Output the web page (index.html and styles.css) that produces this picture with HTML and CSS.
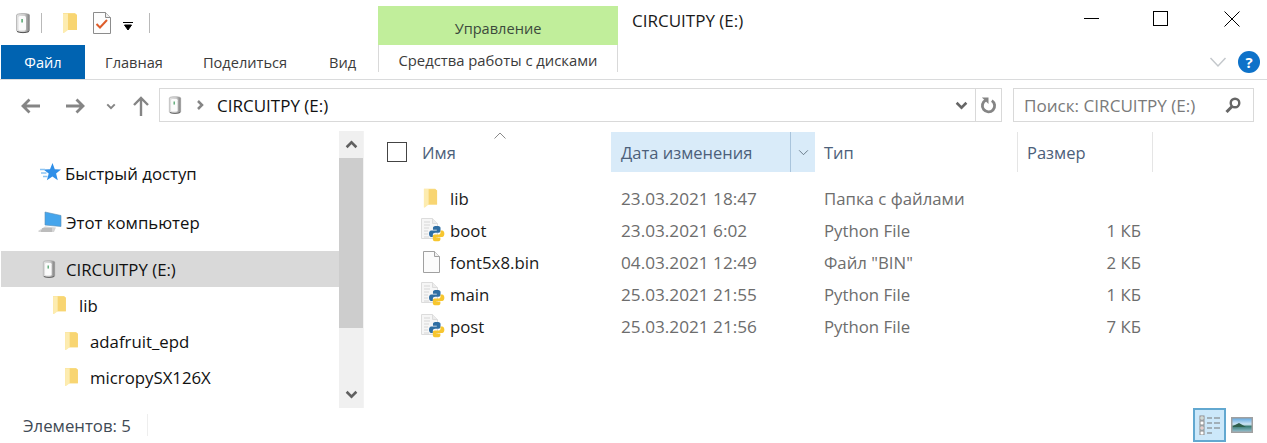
FILE: index.html
```html
<!DOCTYPE html>
<html lang="ru">
<head>
<meta charset="utf-8">
<title>CIRCUITPY (E:)</title>
<link rel="stylesheet" href="styles.css">
</head>
<body>
<svg class="defs" width="0" height="0" aria-hidden="true">
  <defs>
    <linearGradient id="drv" x1="0" y1="0" x2="1" y2="0"><stop offset="0" stop-color="#e2e2e2"/><stop offset=".6" stop-color="#cfcfcf"/><stop offset="1" stop-color="#7c7c7c"/></linearGradient>
    <symbol id="folder" viewBox="0 0 16 22">
      <path d="M1 1h12l2 2v15H5l-4 3z" fill="#f9dc85"/>
      <path d="M5 2h8l2 1v15H5z" fill="#f8d572"/>
      <path d="M1 1.500h5V18l-4 3H1z" fill="#fdecb0"/>
    </symbol>
    <symbol id="drive" viewBox="0 0 16 22">
      <path d="M1.500 3C1.500 1 14.500 1 14.500 3V18.500c0 2.500-13 2.500-13 0z" fill="url(#drv)" stroke="#999" stroke-width=".6"/>
      <rect x="3.500" y="4" width="7.500" height="14.500" rx="1.500" fill="#fbfbfb"/>
      <rect x="6.300" y="7" width="1.600" height="3.500" fill="#5aa874"/>
      <path d="M2 19.500c3 1.500 9 1.500 12 0" stroke="#555" fill="none"/>
    </symbol>
    <symbol id="python" viewBox="0 0 24 24">
      <path d="M.5.500h11l5 5v15H.500z" fill="#f6f6f6" stroke="#dcdcdc"/>
      <path d="M11.500.500v5h5" fill="#ececec" stroke="#dcdcdc"/>
      <path d="M3 4h6M3 7h6M3 10h5M3 13h4M3 16h4M3 19h5" stroke="#d6d6d6"/>
      <g transform="translate(8 8) scale(.64)">
        <path d="M12 0C8 0 6.200 1 6.200 3V6h6V7H3.500C1.200 7 0 9 0 12s1.200 5 3.500 5H6V14c0-2.200 1.500-3.300 3.500-3.300H15c1.800 0 3-1.100 3-2.700V3c0-2-2-3-6-3z" fill="#2f6ea3"/>
        <path d="M12 24c4 0 5.800-1 5.800-3V18h-6V17h8.700c2.300 0 3.500-2 3.500-5s-1.200-5-3.500-5H18v3c0 2.200-1.500 3.300-3.500 3.300H9c-1.800 0-3 1.100-3 2.700V21c0 2 2 3 6 3z" fill="#f7c62f"/>
      </g>
    </symbol>
    <symbol id="chev-d" viewBox="0 0 12 8"><path d="M1.500 1.500 6 6l4.500-4.500" fill="none" stroke="currentColor" stroke-width="2.400"/></symbol>
    <symbol id="thin-d" viewBox="0 0 12 8"><path d="M1 1.500 6 6.500l5-5" fill="none" stroke="currentColor" stroke-width="1"/></symbol>
  </defs>
</svg>

<header class="titlebar">
  <div class="qat">
    <svg class="qat-drive"><use href="#drive"/></svg>
    <span class="qat-sep first"></span>
    <svg class="qat-folder"><use href="#folder"/></svg>
    <svg class="qat-check" viewBox="0 0 18 22">
      <path d="M.5.500h12l5 5v16H.500z" fill="#fdfdfd" stroke="#8c8c8c"/>
      <path d="M12.500.500v5h5" fill="#eee" stroke="#8c8c8c"/>
      <path d="M3.500 12l3.500 3.500L14 8" fill="none" stroke="#dd5c2a" stroke-width="2"/>
    </svg>
    <svg class="qat-more" viewBox="0 0 10 9"><path d="M0 .5h10M1.500 3h7L5 8z" stroke="#000" fill="#000" stroke-width="1"/></svg>
    <span class="qat-sep"></span>
  </div>
  <div class="context-label">Управление</div>
  <div class="window-title">CIRCUITPY (E:)</div>
  <div class="window-controls">
    <svg class="wc wc-min" viewBox="0 0 16 16"><path d="M0 7.500h15" stroke="#000"/></svg>
    <svg class="wc wc-max" viewBox="0 0 16 16"><rect x=".5" y=".5" width="14" height="14" fill="none" stroke="#000"/></svg>
    <svg class="wc wc-close" viewBox="0 0 16 16"><path d="M.5.500l15 15M15.500.500l-15 15" stroke="#000" fill="none"/></svg>
  </div>
</header>

<nav class="ribbon">
  <div class="tab tab-file">Файл</div>
  <div class="tab tab-home">Главная</div>
  <div class="tab tab-share">Поделиться</div>
  <div class="tab tab-view">Вид</div>
  <div class="tab tab-context">Средства работы с дисками</div>
  <svg class="ribbon-chev" viewBox="0 0 18 12"><path d="M1.500 2 9 10l7.500-8" fill="none" stroke="#c4c8cc" stroke-width="1.500"/></svg>
  <div class="help">?</div>
</nav>

<div class="addressbar">
  <svg class="nav-arrow back" viewBox="0 0 20 16"><path d="M20 8H3M9.500 1.500 3 8l6.500 6.500" fill="none" stroke="#858585" stroke-width="2.800"/></svg>
  <svg class="nav-arrow fwd" viewBox="0 0 20 16"><path d="M0 8h17M10.500 1.500 17 8l-6.500 6.500" fill="none" stroke="#858585" stroke-width="2.800"/></svg>
  <svg class="recent"><use href="#chev-d"/></svg>
  <svg class="up" viewBox="0 0 16 20"><path d="M8 20V2M1 9l7-7 7 7" fill="none" stroke="#858585" stroke-width="2.400"/></svg>
  <div class="pathbox">
    <svg class="path-drive"><use href="#drive"/></svg>
    <svg class="path-sep" viewBox="0 0 7 10"><path d="M1 1l4 4-4 4" fill="none" stroke="#858585" stroke-width="2.500"/></svg>
    <span class="path-text">CIRCUITPY (E:)</span>
    <svg class="path-drop"><use href="#chev-d"/></svg>
    <div class="path-refresh">
      <svg viewBox="0 0 18 18"><path d="M6 3.500a6.500 6.500 0 1 0 6.500 .3" fill="none" stroke="#858585" stroke-width="3"/><path d="M2 .5h7v7z" fill="#858585"/></svg>
    </div>
  </div>
  <div class="searchbox">
    <span class="search-text">Поиск: CIRCUITPY (E:)</span>
    <svg class="search-icon" viewBox="0 0 16 16"><circle cx="10" cy="6" r="4.300" fill="none" stroke="#666" stroke-width="2.400"/><path d="M7 9.500 1.500 15" stroke="#666" stroke-width="3"/></svg>
  </div>
</div>

<main class="main">
  <aside class="nav">
    <div class="tree">
      <div class="node node-quick">
        <svg class="ico-star" viewBox="0 0 21 20"><path d="M12.500 0l2.300 6.300 6.200.3-4.900 4 1.700 6.600-5.400-3.700-5.500 3.700 1.800-6.600L3.500 6.600 10 6.300z" fill="#2f8fe8"/><path d="M0 6.500h5M1 10h5.500M3 13.500h4.500" stroke="#8cc4f2" stroke-width="1.300"/></svg>
        Быстрый доступ
      </div>
      <div class="node node-pc">
        <svg class="ico-pc" viewBox="0 0 24 22"><path d="M7 1l16 3.500v11L7 14z" fill="#45a5ec" stroke="#5d8fb5" stroke-width=".6"/><path d="M0 20l7-4.500 11 1-2 4.500H1z" fill="#d4d4d4"/><path d="M4 18h10M3 20h11" stroke="#a4a4a4"/></svg>
        Этот компьютер
      </div>
      <div class="node node-drive">
        <svg class="ico-drive"><use href="#drive"/></svg>
        CIRCUITPY (E:)
      </div>
      <div class="node node-lib">
        <svg class="ico-folder"><use href="#folder"/></svg>
        lib
      </div>
      <div class="node node-sub">
        <svg class="ico-folder"><use href="#folder"/></svg>
        adafruit_epd
      </div>
      <div class="node node-sub">
        <svg class="ico-folder"><use href="#folder"/></svg>
        micropySX126X
      </div>
    </div>
  </aside>
  <div class="scrollbar">
    <div class="sb-btn"><svg class="sb-up"><use href="#chev-d"/></svg></div>
    <div class="sb-thumb"></div>
    <div class="sb-track"></div>
    <div class="sb-btn sb-bottom"><svg><use href="#chev-d"/></svg></div>
  </div>
  <section class="content">
    <div class="head">
      <div class="hcell h-name">
        <span class="checkbox"></span>
        <span>Имя</span>
        <svg class="sort" viewBox="0 0 12 7"><path d="M.5 6.500 6 1l5.500 5.500" fill="none" stroke="#8a8a8a"/></svg>
      </div>
      <div class="hcell h-date"><span class="h-date-text">Дата изменения</span><span class="h-date-btn"><svg><use href="#thin-d"/></svg></span></div>
      <div class="hcell h-type">Тип</div>
      <div class="hcell h-size">Размер</div>
    </div>
    <div class="rows">
      <div class="row">
        <div class="c-name"><svg class="row-folder"><use href="#folder"/></svg>lib</div>
        <div class="c-date">23.03.2021 18:47</div><div class="c-type">Папка с файлами</div><div class="c-size"></div>
      </div>
      <div class="row">
        <div class="c-name"><svg class="row-py"><use href="#python"/></svg>boot</div>
        <div class="c-date">23.03.2021 6:02</div><div class="c-type">Python File</div><div class="c-size">1 КБ</div>
      </div>
      <div class="row">
        <div class="c-name"><svg class="row-file" viewBox="0 0 18 22"><path d="M.5.500h11l5 5v16H.500z" fill="#fbfbfb" stroke="#a0a0a0"/><path d="M11.500.500v5h5" fill="#f0f0f0" stroke="#a0a0a0"/></svg>font5x8.bin</div>
        <div class="c-date">04.03.2021 12:49</div><div class="c-type">Файл "BIN"</div><div class="c-size">2 КБ</div>
      </div>
      <div class="row">
        <div class="c-name"><svg class="row-py"><use href="#python"/></svg>main</div>
        <div class="c-date">25.03.2021 21:55</div><div class="c-type">Python File</div><div class="c-size">1 КБ</div>
      </div>
      <div class="row">
        <div class="c-name"><svg class="row-py"><use href="#python"/></svg>post</div>
        <div class="c-date">25.03.2021 21:56</div><div class="c-type">Python File</div><div class="c-size">7 КБ</div>
      </div>
    </div>
  </section>
</main>

<footer class="status">
  <span class="status-text">Элементов: 5</span>
  <span class="status-sep"></span>
  <div class="view-btn active">
    <svg viewBox="0 0 22 20">
      <rect x="1" y="1" width="4" height="4" fill="#fff" stroke="#8a8a8a"/><rect x="1" y="6" width="4" height="4" fill="#fff" stroke="#8a8a8a"/><rect x="1" y="11" width="4" height="4" fill="#fff" stroke="#8a8a8a"/><rect x="1" y="16" width="4" height="4" fill="#fff" stroke="#8a8a8a"/>
      <path d="M2.500 2.500h1v1h-1z" fill="#3a7a60"/><path d="M2.500 12.500h1v1h-1z" fill="#b03030"/>
      <path d="M8 3h5M15 3h6M8 8h5M15 8h6M8 13h5M15 13h6M8 18h5" stroke="#777" stroke-width="1.200"/>
    </svg>
  </div>
  <svg class="view-large" viewBox="0 0 22 16">
    <defs><linearGradient id="sky" x1="0" y1="0" x2="0" y2="1"><stop offset="0" stop-color="#5aa5e0"/><stop offset=".45" stop-color="#cfe6f5"/><stop offset=".6" stop-color="#3d7f78"/><stop offset="1" stop-color="#9cc5d8"/></linearGradient></defs>
    <rect x=".75" y=".75" width="20.500" height="14.500" fill="url(#sky)" stroke="#a0a0a0" stroke-width="1.500"/>
    <path d="M2 9l6-3 7 4H2z" fill="#2f5f4c"/>
  </svg>
</footer>
</body>
</html>
```

FILE: styles.css
```css
* { box-sizing: border-box; }
html, body { margin: 0; padding: 0; }
body {
  width: 1267px;
  height: 443px;
  overflow: hidden;
  background: #fff;
  color: #000;
  font-family: "Open Sans", "Noto Sans", sans-serif;
  font-size: 16.8px;
  display: flex;
  flex-direction: column;
}
.defs { display: block; height: 0; }
svg { display: block; flex: none; }

/* title bar */
.titlebar { height: 45px; flex: none; display: flex; align-items: flex-start; }
.qat { width: 378px; height: 45px; display: flex; align-items: center; padding: 1px 0 0 15px; flex: none; }
.qat-drive { width: 16px; height: 22px; }
.qat-sep { width: 1px; height: 20px; background: #b9b9b9; margin-left: 16px; }
.qat-sep.first { margin-left: 10px; }
.qat-folder { width: 16px; height: 22px; margin-left: 20px; }
.qat-check { width: 18px; height: 22px; margin-left: 15px; }
.qat-more { width: 10px; height: 9px; margin-left: 12px; margin-top: 6px; }
.context-label {
  width: 240px; height: 39px; margin-top: 6px; flex: none;
  background: #c1ee9b; color: #3c4a3c; font-size: 14.6px;
  display: flex; align-items: center; justify-content: center; padding-top: 5px;
}
.window-title { padding: 11px 0 0 14px; color: #1a1a1a; line-height: 20px; font-size: 17px; }
.window-controls { margin-left: auto; display: flex; align-items: center; height: 45px; padding: 0 27px 8px 0; }
.wc { width: 16px; height: 16px; }
.wc-max { margin-left: 53px; }
.wc-close { margin-left: 55px; }

/* ribbon */
.ribbon { height: 35px; flex: none; display: flex; border-bottom: 1px solid #dadbdc; padding-left: 1px; align-items: flex-start; }
.tab { height: 34px; display: flex; align-items: center; justify-content: center; color: #3b3b3b; flex: none; font-size: 14.6px; }
.tab-file { width: 84px; background: #0063b1; color: #fff; }
.tab-home { width: 98px; }
.tab-share { width: 124px; }
.tab-view { width: 71px; }
.tab-context { width: 240px; height: 27px; border: 1px solid #d9d9d9; border-width: 0 1px; padding-top: 6px; align-items: flex-start; line-height: 19px; font-size: 14.8px; }
.ribbon-chev { width: 18px; height: 12px; margin: 11px 0 0 591px; }
.help {
  width: 22px; height: 22px; border-radius: 50%; background: #0e72c9; color: #fff;
  margin: 6px 0 0 11px; text-align: center; line-height: 22px; font-weight: 700; font-size: 15px;
}

/* address bar */
.addressbar { height: 51px; flex: none; display: flex; align-items: flex-start; padding-top: 8px; }
.nav-arrow { width: 20px; height: 16px; margin-top: 10px; }
.back { margin-left: 20px; }
.fwd { margin-left: 26px; }
.recent { width: 10px; height: 7px; color: #858585; margin: 15px 0 0 20px; }
.up { width: 16px; height: 20px; margin: 8px 0 0 17px; }
.pathbox {
  width: 843px; height: 34px; margin-left: 10px; border: 1px solid #d9d9d9; flex: none;
  display: flex; align-items: center; padding-left: 8px;
}
.path-drive { width: 14px; height: 20px; }
.path-sep { width: 7px; height: 10px; margin-left: 15px; }
.path-text { margin-left: 13px; color: #111; font-size: 17px; }
.path-drop { width: 13px; height: 9px; color: #666; margin-left: auto; margin-right: 7px; }
.path-refresh { width: 26px; height: 32px; border-left: 1px solid #d9d9d9; display: flex; align-items: center; justify-content: center; }
.path-refresh svg { width: 17px; height: 17px; }
.searchbox {
  width: 241px; height: 34px; margin-left: 11px; border: 1px solid #d9d9d9; flex: none;
  display: flex; align-items: center; padding: 0 12px 0 10px; justify-content: space-between;
}
.search-text { color: #7a7a7a; white-space: nowrap; font-size: 17.1px; }
.search-icon { width: 16px; height: 16px; }

/* main */
.main { flex: 1; display: flex; min-height: 0; }
.nav { width: 339px; flex: none; padding: 24px 0 0 1px; color: #111; }
.node { height: 36px; display: flex; align-items: center; }
.node-quick { padding-left: 39px; gap: 4px; }
.ico-star { width: 21px; height: 20px; }
.node-pc { padding-left: 37px; margin-top: 13px; gap: 4px; }
.ico-pc { width: 24px; height: 22px; }
.node-drive { padding-left: 41px; background: #d9d9d9; margin-top: 11px; gap: 10px; }
.ico-drive { width: 14px; height: 20px; }
.node-lib { padding-left: 51px; gap: 12px; }
.node-sub { padding-left: 63px; gap: 11px; }
.ico-folder { width: 15px; height: 20px; }

.scrollbar { width: 24px; flex: none; background: #f0f0f0; display: flex; flex-direction: column; height: 277px; }
.sb-btn { height: 27px; flex: none; display: flex; align-items: center; justify-content: center; color: #606060; }
.sb-btn svg { width: 13px; height: 9px; }
.sb-up { transform: rotate(180deg); }
.sb-thumb { height: 170px; flex: none; background: #cdcdcd; }
.sb-track { flex: 1; }

.content { flex: 1; display: flex; flex-direction: column; border-left: 1px solid #f3f3f3; height: 277px; }
.head { display: flex; height: 41px; margin-top: 1px; flex: none; color: #4c607a; font-size: 16.5px; }
.hcell { display: flex; align-items: center; flex: none; padding-left: 9px; border-right: 1px solid #e5e5e5; height: 40px; }
.h-name { width: 247px; padding-left: 23px; gap: 0; border: 0; position: relative; }
.checkbox { width: 20px; height: 20px; border: 1px solid #444; margin-right: 15px; flex: none; }
.sort { width: 12px; height: 7px; position: absolute; left: 130px; top: 0; }
.h-date { width: 204px; padding: 0; background: #d9ebf9; border: 0; justify-content: space-between; }
.h-date-text { padding-left: 10px; }
.h-date-btn { width: 25px; height: 40px; border-left: 1px solid #a9c4dc; display: flex; align-items: center; justify-content: center; color: #5a6b7a; }
.h-date-btn svg { width: 11px; height: 7px; }
.h-type { width: 203px; }
.h-size { width: 135px; }

.rows { padding-top: 9px; }
.row { height: 32px; display: flex; align-items: center; color: #6d6d6d; }
.c-name { width: 247px; flex: none; display: flex; align-items: center; color: #1a1a1a; padding-left: 59px; }
.row-folder { width: 15px; height: 22px; margin-right: 12px; }
.row-py { width: 24px; height: 24px; margin: 0 5px 0 -2px; }
.row-file { width: 18px; height: 22px; margin-right: 9px; }
.c-date { width: 204px; flex: none; padding-left: 10px; font-size: 17.2px; }
.c-type { width: 203px; flex: none; padding-left: 9px; }
.c-size { width: 123px; flex: none; text-align: right; }

/* status */
.status { height: 36px; flex: none; display: flex; align-items: center; padding-left: 23px; color: #3f4a55; }
.status-text { width: 124px; flex: none; }
.status-sep { width: 1px; height: 22px; background: #eee; }
.view-btn { margin-left: 1045px; width: 33px; height: 34px; background: #cce8fa; border: 2px solid #62a8d0; display: flex; align-items: center; justify-content: center; }
.view-btn svg { width: 22px; height: 20px; }
.view-large { width: 22px; height: 16px; margin-left: 5px; }
```
